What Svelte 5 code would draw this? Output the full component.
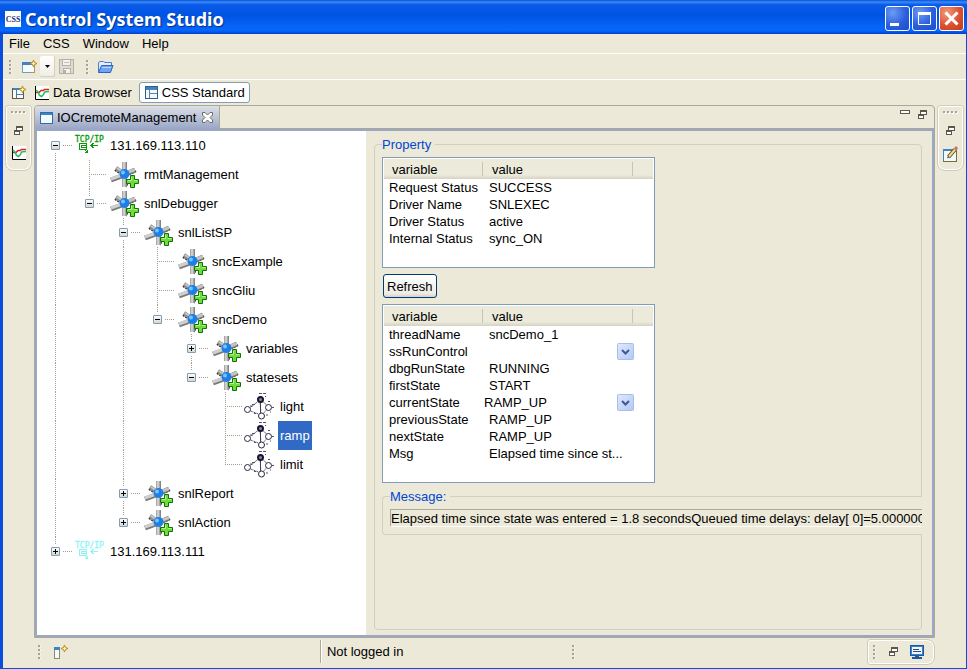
<script>
  // guides: one entry per indent cell
  // '' blank, 'v' through, 't' tee, 'l' last child, 'r' first root
  const tree = [
    { label: '131.169.113.110', icon: 'host', open: true, guides: ['r'] },
    { label: 'rmtManagement', icon: 'node', guides: ['v', 't'] },
    { label: 'snlDebugger', icon: 'node', open: true, guides: ['v', 'l'] },
    { label: 'snlListSP', icon: 'node', open: true, guides: ['v', '', 't'] },
    { label: 'sncExample', icon: 'node', guides: ['v', '', 'v', 't'] },
    { label: 'sncGliu', icon: 'node', guides: ['v', '', 'v', 't'] },
    { label: 'sncDemo', icon: 'node', open: true, guides: ['v', '', 'v', 'l'] },
    { label: 'variables', icon: 'node', open: false, guides: ['v', '', 'v', '', 't'] },
    { label: 'statesets', icon: 'node', open: true, guides: ['v', '', 'v', '', 'l'] },
    { label: 'light', icon: 'state', guides: ['v', '', 'v', '', '', 't'] },
    { label: 'ramp', icon: 'state', selected: true, guides: ['v', '', 'v', '', '', 't'] },
    { label: 'limit', icon: 'state', guides: ['v', '', 'v', '', '', 'l'] },
    { label: 'snlReport', icon: 'node', open: false, guides: ['v', '', 't'] },
    { label: 'snlAction', icon: 'node', open: false, guides: ['v', '', 'l'] },
    { label: '131.169.113.111', icon: 'hostOff', open: false, guides: ['l'] },
  ];

  const driver = [
    ['Request Status', 'SUCCESS'],
    ['Driver Name', 'SNLEXEC'],
    ['Driver Status', 'active'],
    ['Internal Status', 'sync_ON'],
  ];

  const thread = [
    ['threadName', 'sncDemo_1'],
    ['ssRunControl', '', true],
    ['dbgRunState', 'RUNNING'],
    ['firstState', 'START'],
    ['currentState', 'RAMP_UP', true],
    ['previousState', 'RAMP_UP'],
    ['nextState', 'RAMP_UP'],
    ['Msg', 'Elapsed time since st...'],
  ];

  const message =
    'Elapsed time since state was entered = 1.8 secondsQueued time delays: delay[ 0]=5.000000';
</script>

{#snippet handle()}
  <svg class="handle" width="4" height="14" viewBox="0 0 4 14" aria-hidden="true">
    {#each [0, 4, 8, 12] as y}
      <rect x="1" y={y + 1} width="2" height="1" fill="#fff" />
      <rect x="0" {y} width="2" height="2" fill="#a5a297" />
    {/each}
  </svg>
{/snippet}

{#snippet hhandle()}
  <svg width="16" height="4" viewBox="0 0 16 4" aria-hidden="true">
    {#each [0, 4, 8, 12] as x}
      <rect x={x + 1} y="1" width="2" height="2" fill="#fff" />
      <rect {x} y="0" width="2" height="2" fill="#a5a297" />
    {/each}
  </svg>
{/snippet}

{#snippet restore()}
  <svg width="9" height="9" viewBox="0 0 9 9" aria-hidden="true">
    <rect x="2.500" y=".5" width="6" height="4" fill="#fff" stroke="#5c574b" />
    <path d="M2 1.500H9" stroke="#5c574b" />
    <rect x=".5" y="4.500" width="5" height="4" fill="#fff" stroke="#5c574b" />
    <path d="M0 5.500H6" stroke="#5c574b" />
  </svg>
{/snippet}

{#snippet chart()}
  <svg width="14" height="14" viewBox="0 0 14 14" aria-hidden="true">
    <rect width="14" height="14" fill="#fff" />
    <path d="M.5 0V13.500H14" fill="none" stroke="#000" />
    <path d="M1 6.500H4L6 4.500H8L9.500 3.500H14" fill="none" stroke="#e02020" stroke-width="1.500" />
    <path d="M1 4L3 6L4.500 9.500L6.500 10.500L8.500 8.500L9.500 6L14 5.500" fill="none" stroke="#20c060" stroke-width="1.500" />
  </svg>
{/snippet}

{#snippet spark(x, y)}
  <path d="M{x} {y - 3.5}L{x + 1} {y - 1}L{x + 3.5} {y}L{x + 1} {y + 1}L{x} {y + 3.5}L{x - 1} {y + 1}L{x - 3.5} {y}L{x - 1} {y - 1}Z" fill="#fff3b0" stroke="#b58a1c" />
{/snippet}

{#snippet treeIcon(kind)}
  {#if kind === 'node'}
    <svg width="32" height="29" viewBox="0 0 32 29" aria-hidden="true">
      <path d="M7 10L13 14M28 11L22 14M20 21L18 27" stroke="#222" stroke-width="2" stroke-dasharray="2 1" />
      <path d="M8 8L15 13" stroke="#8c8c8c" stroke-width="4" />
      <path d="M9 8L15 12" stroke="#c8c8c8" stroke-width="2" />
      <path d="M18 14L27 10" stroke="#777" stroke-width="5" />
      <path d="M18 13L27 9.500" stroke="#c4c4c4" stroke-width="3" />
      <path d="M16.500 2V12M16.500 18V27" stroke="#858585" stroke-width="5" />
      <path d="M16 2V12M16 18V27" stroke="#cdcdcd" stroke-width="3" />
      <path d="M3 20L14 16" stroke="#7a7a7a" stroke-width="5" />
      <path d="M3 19L14 15" stroke="#cfcfcf" stroke-width="3" />
      <circle cx="16.500" cy="14" r="5" fill="#1c7fe6" />
      <circle cx="15" cy="12.500" r="2" fill="#7cc0ff" />
      <path d="M22.500 15.500H26.500V19.500H30.500V23.500H26.500V27.500H22.500V23.500H18.500V19.500H22.500Z" fill="#6fdc3c" stroke="#14700c" />
      <path d="M23.500 17V20.500H20M26 20.500H29.500" fill="none" stroke="#b4f58c" />
    </svg>
  {:else if kind === 'state'}
    <svg width="32" height="29" viewBox="0 0 32 29" aria-hidden="true">
      <path d="M4 17L16 8L17 23L4 18M18 9L25 15L18 23" fill="none" stroke="#55506c" stroke-dasharray="2 1" />
      <path d="M16.500 10V21" stroke="#44405c" />
      <circle cx="16.500" cy="7.500" r="2.500" fill="#8a86a8" stroke="#17142c" stroke-width="2" />
      <circle cx="3.500" cy="17.500" r="3" fill="#fff" stroke="#2b2840" />
      <circle cx="24.500" cy="15.500" r="3" fill="#fff" stroke="#2b2840" />
      <circle cx="17.500" cy="24" r="3" fill="#fff" stroke="#2b2840" />
      <path d="M15 1.500H18M19 1.500H22M6 14H9M8 12.500H11M21 4.500H22M28 15.500H30M22 23H24M24 9.500H26M10 21.500H12M26 20H27" stroke="#55506c" />
    </svg>
  {:else}
    {@const ink = kind === 'host' ? '#0a9a0a' : '#8ff4f8'}
    <svg width="32" height="29" viewBox="0 0 32 29" aria-hidden="true">
      <text x="1" y="11" font-size="8" font-family="DejaVu Sans Mono, monospace" fill={ink} stroke={ink} stroke-width=".3">TCP/IP</text>
      <g stroke={ink} fill="none" shape-rendering="crispEdges">
        <rect x="5.500" y="12.500" width="7" height="6" />
        <rect x="7.500" y="14.500" width="5" height="2" />
        <path d="M16 14.500H24M19.500 12L17 14.500L19.500 17M10 18L13 21M13.500 18.500V22M10.500 21.500H14" />
      </g>
    </svg>
  {/if}
{/snippet}

{#snippet propTable(rows, tall)}
  <div class="tablebox" class:tall>
    <table>
      <colgroup><col class="c1" /><col class="c2" /><col /></colgroup>
      <thead>
        <tr><th><span>variable</span></th><th><span>value</span></th><th></th></tr>
      </thead>
      <tbody>
        {#each rows as [name, value, combo]}
          <tr>
            <td>{name}</td>
            {#if combo}
              <td class="combo">
                <span class="pick">
                  <select aria-label={name}><option>{value}</option></select>
                  <svg width="17" height="17" viewBox="0 0 17 17" aria-hidden="true">
                    <defs>
                      <linearGradient id="arrow-{name}" x1="0" y1="0" x2="1" y2="1">
                        <stop offset="0" stop-color="#e0e9fe" /><stop offset="1" stop-color="#b2c8f8" />
                      </linearGradient>
                    </defs>
                    <rect x=".5" y=".5" width="16" height="16" rx="1" fill="url(#arrow-{name})" stroke="#a9bde8" />
                    <path d="M5 7L8.500 10.500L12 7" fill="none" stroke="#3f5a8c" stroke-width="2" />
                  </svg>
                </span>
              </td>
            {:else}
              <td>{value}</td>
            {/if}
            <td></td>
          </tr>
        {/each}
      </tbody>
    </table>
  </div>
{/snippet}

<div class="window">
  <header class="title">
    <svg width="16" height="16" viewBox="0 0 16 16" aria-hidden="true">
      <rect width="16" height="16" fill="#fff" />
      <text x="8" y="11" text-anchor="middle" font-size="8" font-family="Liberation Serif, serif" font-weight="bold" fill="#26307a">CSS</text>
    </svg>
    <h1>Control System Studio</h1>
    <button class="wb" aria-label="Minimize"><svg width="23" height="23" viewBox="0 0 23 23"><rect x="4" y="16" width="9" height="3" fill="#fff" /></svg></button>
    <button class="wb" aria-label="Maximize"><svg width="23" height="23" viewBox="0 0 23 23"><path d="M5.500 5V17.500H17.500V5" fill="none" stroke="#fff" /><rect x="5" y="5" width="13" height="3" fill="#fff" /></svg></button>
    <button class="wb close" aria-label="Close"><svg width="23" height="23" viewBox="0 0 23 23"><path d="M5.500 5.500L17.500 17.500M17.500 5.500L5.500 17.500" stroke="#fff" stroke-width="3" /></svg></button>
  </header>

  <nav class="menu">
    {#each ['File', 'CSS', 'Window', 'Help'] as item}<button>{item}</button>{/each}
  </nav>

  <div class="tools">
    {@render handle()}
    <button class="ib new" aria-label="New">
      <svg width="16" height="16" viewBox="0 0 16 16">
        <rect x=".5" y="3.500" width="12" height="10" fill="#f4fafe" stroke="#b09a58" />
        <path d="M.5 13V3.500M1 13.500H9" stroke="#6d9cc4" fill="none" />
        <rect x="0" y="3" width="12" height="3" fill="#3f83c0" />
        {@render spark(11.5, 4.5)}
      </svg>
    </button>
    <button class="ib drop" aria-label="New menu"><svg width="5" height="3" viewBox="0 0 5 3"><path d="M0 0H5L2.500 3Z" /></svg></button>
    <button class="ib save" aria-label="Save">
      <svg width="15" height="15" viewBox="0 0 15 15">
        <rect x=".5" y=".5" width="14" height="14" fill="#dddbd2" stroke="#b4b2a6" />
        <rect x="3.500" y=".5" width="8" height="6" fill="#f3f2ec" stroke="#b4b2a6" />
        <path d="M5 3.500H10" stroke="#c4c2b7" />
        <rect x="4.500" y="9.500" width="7" height="5" fill="#f3f2ec" stroke="#b4b2a6" />
        <rect x="5" y="11" width="2" height="3" fill="#b4b2a6" />
      </svg>
    </button>
    {@render handle()}
    <button class="ib open" aria-label="Open">
      <svg width="17" height="14" viewBox="0 0 17 14">
        <path d="M1.500 12.500V2.500L3 1.500H6.500L8 2.500H14.500V6" fill="#e4effc" stroke="#4a7bd0" />
        <path d="M1.500 12.500L4.500 5.500H16L13.500 12.500Z" fill="#6fa4f0" stroke="#2f62c4" />
        <path d="M5 7.500H14" stroke="#b8d4fb" />
      </svg>
    </button>
  </div>

  <div class="perspectives">
    <button class="ib openp" aria-label="Open Perspective">
      <svg width="15" height="15" viewBox="0 0 15 15">
        <rect x=".5" y="3.500" width="11" height="10" fill="#f6fafc" stroke="#5f5b3e" />
        <rect x="1" y="3" width="8" height="2" fill="#3f83c0" />
        <path d="M4.500 5V13M4.500 9.500H11" stroke="#4d7ba6" />
        {@render spark(10.5, 4.5)}
      </svg>
    </button>
    <button class="persp">{@render chart()}Data Browser</button>
    <button class="persp on">
      <svg width="13" height="13" viewBox="0 0 13 13" aria-hidden="true">
        <rect x=".5" y=".5" width="12" height="12" fill="#f4f8fc" stroke="#2f5e92" />
        <rect x="1" y="1" width="11" height="2" fill="#3f83c0" />
        <path d="M1 3.500H12M4.500 4V12M5 7.500H12" stroke="#5b84ad" />
      </svg>CSS Standard
    </button>
  </div>

  <main>
    <aside class="trim">
      {@render hhandle()}
      <button class="ib" aria-label="Restore">{@render restore()}</button>
      <button class="ib" aria-label="Data Browser view">{@render chart()}</button>
    </aside>

    <section class="stack">
      <div class="tabs">
        <div class="tab">
          <svg width="13" height="12" viewBox="0 0 13 12" aria-hidden="true">
            <rect x=".5" y=".5" width="12" height="11" fill="#f2f9ff" stroke="#2f6ca8" />
            <rect x="1" y="1" width="11" height="2" fill="#3f83c0" />
          </svg>
          <span>IOCremoteManagement</span>
          <button class="ib" aria-label="Close tab">
            <svg width="11" height="11" viewBox="0 0 11 11"><path d="M.5 .5H3L5.500 3L8 .5H10.500V3L8 5.500L10.500 8V10.500H8L5.500 8L3 10.500H.5V8L3 5.500L.5 3Z" fill="#fff" stroke="#6b6a66" /></svg>
          </button>
        </div>
        <div class="tabrest">
          <button class="ib" aria-label="Minimize view"><svg width="10" height="9" viewBox="0 0 10 9"><rect x=".5" y=".5" width="9" height="3" fill="#fff" stroke="#5c574b" /></svg></button>
          <button class="ib" aria-label="Restore view">{@render restore()}</button>
        </div>
      </div>

      <div class="content">
        <ul class="tree" role="tree">
          {#each tree as node}
            <li role="treeitem" aria-selected={node.selected ?? false}>
              {#each node.guides as g, i}
                <span class="cell {g}">
                  {#if i === node.guides.length - 1 && node.open !== undefined}
                    <button class="tog" aria-label="Toggle {node.label}">
                      <svg width="9" height="9" viewBox="0 0 9 9"><path d={node.open ? 'M2 4.500H7' : 'M2 4.500H7M4.500 2V7'} stroke="#000" /></svg>
                    </button>
                  {/if}
                </span>
              {/each}
              <span class="icon">{@render treeIcon(node.icon)}</span>
              <span class="label" class:sel={node.selected}>{node.label}</span>
            </li>
          {/each}
        </ul>

        <div class="detail">
          <fieldset>
            <legend>Property</legend>
            {@render propTable(driver, false)}
            <button class="refresh">Refresh</button>
            {@render propTable(thread, true)}
            <fieldset class="msg">
              <legend>Message:</legend>
              <input type="text" readonly value={message} aria-label="Message" />
            </fieldset>
          </fieldset>
        </div>
      </div>
    </section>

    <aside class="trim">
      {@render hhandle()}
      <button class="ib" aria-label="Restore">{@render restore()}</button>
      <button class="ib" aria-label="Editor">
        <svg width="16" height="16" viewBox="0 0 16 16">
          <rect x=".5" y="3.500" width="13" height="12" fill="#f2f9ff" stroke="#7a6a3c" />
          <path d="M.5 15V4" stroke="#3f83c0" /><rect x="0" y="3" width="14" height="2" fill="#3f83c0" />
          <path d="M5.500 11L12 3.500" stroke="#6a5528" stroke-width="4" />
          <path d="M6 10.500L12 3.500" stroke="#f3d98a" stroke-width="2" />
          <path d="M12 3.500L14 1" stroke="#c8776a" stroke-width="3" />
          <path d="M4 12.500L6 11.500L5 10.500Z" fill="#222" />
        </svg>
      </button>
    </aside>
  </main>

  <footer>
    <div class="fast">
      {@render handle()}
      <button class="ib" aria-label="Fast view">
        <svg width="15" height="14" viewBox="0 0 15 14">
          <rect x=".5" y="2.500" width="5" height="11" fill="#f2f9ff" stroke="#8a8a70" />
          <rect x="0" y="2" width="6" height="3" fill="#3f83c0" />
          {@render spark(10.5, 3.5)}
        </svg>
      </button>
    </div>
    <div class="login">Not logged in</div>
    <div class="progress">{@render handle()}</div>
    <div class="ftrim">
      {@render handle()}
      <button class="ib" aria-label="Restore">{@render restore()}</button>
      <button class="ib" aria-label="Console">
        <svg width="14" height="14" viewBox="0 0 14 14">
          <rect x=".5" y=".5" width="13" height="10" fill="#3f7fc8" stroke="#1f56a0" />
          <rect x="2" y="2" width="10" height="7" fill="#eef5fc" />
          <path d="M3 4.500H9M3 6.500H11" stroke="#2a4a86" />
          <path d="M5 11.500H9M2 13H12" stroke="#1f56a0" stroke-width="2" />
        </svg>
      </button>
    </div>
  </footer>
</div>

<style>
  :global(body) {
    margin: 0;
  }
  .window {
    box-sizing: border-box;
    min-height: 100vh;
    display: flex;
    flex-direction: column;
    background: #ece9d8;
    border: solid #0a4be0;
    border-width: 0 1px 1px 3px;
    color: #000;
    font: 13px/17px 'Liberation Sans', Arial, sans-serif;
  }
  button,
  input,
  select {
    font: inherit;
    color: inherit;
    margin: 0;
    border-radius: 0;
  }
  svg {
    display: block;
    flex: none;
  }
  .ib {
    border: 0;
    padding: 0;
    background: none;
    display: flex;
    align-items: center;
    justify-content: center;
  }

  .title {
    height: 34px;
    margin: 0 -1px 0 -3px;
    box-sizing: border-box;
    padding: 3px 3px 0 5px;
    display: flex;
    align-items: center;
    background: linear-gradient(#0a4fd8, #3a8cf8 6%, #0a5ae8 14%, #0054e3 45%, #0562f6 75%, #0666fc 90%, #0040c4);
  }
  h1 {
    flex: 1;
    margin: 0 0 0 4px;
    font: bold 18px/24px 'Noto Sans', sans-serif;
    color: #fff;
    text-shadow: 1px 1px 1px #0a2f86;
  }
  .wb {
    width: 25px;
    height: 25px;
    margin-left: 2px;
    padding: 0;
    border: 1px solid #fff;
    border-radius: 3px;
    background: radial-gradient(circle at 30% 25%, #6d9bf4, #2b5fdc 55%, #1c4ccb);
  }
  .close {
    background: radial-gradient(circle at 30% 25%, #f09a7c, #dc5032 55%, #c2391c);
  }

  .menu {
    height: 19px;
    border-bottom: 1px solid #fff;
    display: flex;
    align-items: center;
  }
  .menu button {
    border: 0;
    background: none;
    padding: 0 7px 0 6px;
  }

  .tools {
    height: 25px;
    border-bottom: 1px solid #fff;
    padding-left: 6px;
    display: flex;
    align-items: center;
  }
  .new {
    margin-left: 9px;
  }
  .drop {
    width: 15px;
    height: 21px;
    margin-left: 2px;
    background: linear-gradient(#fff, #f0eee4);
    border-right: 1px solid #d4d0c0;
    border-bottom: 1px solid #d4d0c0;
    border-radius: 2px;
  }
  .save {
    margin: 0 12px 0 4px;
  }
  .open {
    margin-left: 7px;
  }

  .perspectives {
    height: 25px;
    padding-left: 9px;
    display: flex;
    align-items: center;
  }
  .persp {
    display: flex;
    align-items: center;
    gap: 4px;
    height: 21px;
    padding: 0 5px;
    border: 1px solid transparent;
    border-radius: 3px;
    background: none;
  }
  .openp {
    margin-right: 2px;
  }
  .persp.on {
    margin-left: 1px;
    padding: 0 4px 0 5px;
    background: #fff;
    border-color: #7f9db9;
  }

  main {
    flex: 1;
    display: flex;
    gap: 2px;
    padding: 0 2px;
    min-height: 0;
  }
  .trim {
    align-self: flex-start;
    box-sizing: border-box;
    width: 27px;
    height: 66px;
    padding-top: 5px;
    border: 1px solid #cfccbe;
    border-radius: 3px 3px 8px 8px;
    box-shadow: inset 0 0 0 1px #fff;
    display: flex;
    flex-direction: column;
    align-items: center;
    gap: 11px;
  }

  .stack {
    flex: 1;
    min-width: 0;
    display: flex;
    flex-direction: column;
    border: 1px solid #aca899;
    border-radius: 4px 4px 0 0;
  }
  .tabs {
    height: 25px;
    display: flex;
  }
  .tab {
    display: flex;
    align-items: center;
    gap: 4px;
    padding: 0 6px 2px 5px;
    border-right: 1px solid #aca899;
    border-radius: 3px 0 0 0;
    background: linear-gradient(#dde0e6, #9ba7c7 90%);
  }
  .tab button {
    margin-left: 2px;
  }
  .tabrest {
    flex: 1;
    display: flex;
    justify-content: flex-end;
    align-items: flex-start;
    gap: 8px;
    padding: 4px 7px 0 0;
    border-bottom: 2px solid #9ba7c7;
    box-shadow: inset 0 -1px #aca899;
  }

  .content {
    flex: 1;
    display: grid;
    grid-template-columns: 329fr 566fr;
    border: 2px solid #9ba7c7;
    border-top: 0;
  }
  .tree {
    margin: 0;
    padding: 0 0 0 1px;
    list-style: none;
    background: #fff;
  }
  .tree li {
    display: flex;
    height: 29px;
  }
  .cell {
    --dotv: repeating-linear-gradient(#a39f8c 0 1px, transparent 1px 2px);
    --doth: repeating-linear-gradient(90deg, #a39f8c 0 1px, transparent 1px 2px);
    width: 34px;
    display: flex;
    align-items: center;
    justify-content: center;
    background-repeat: no-repeat;
  }
  .v {
    background-image: var(--dotv);
    background-size: 1px 100%;
    background-position: 17px 0;
  }
  .t,
  .l,
  .r {
    background-image: var(--dotv), var(--doth);
    background-position: 17px 0, 17px 14px;
    background-size: 1px 100%, 17px 1px;
  }
  .l {
    background-size: 1px 14px, 17px 1px;
  }
  .r {
    background-position: 17px 14px, 17px 14px;
  }
  .tog {
    width: 9px;
    height: 9px;
    padding: 0;
    border: 0;
    border-radius: 1px;
    outline: 1px solid #7b9ebd;
    outline-offset: -1px;
    background: linear-gradient(#fff, #d8d2c4);
    box-shadow: 0 0 0 2px #fff;
  }
  .icon {
    width: 36px;
    display: flex;
    justify-content: center;
  }
  .label {
    padding: 0 2px;
    line-height: 29px;
  }
  .sel {
    background: #316ac5;
    color: #fff;
  }

  .detail {
    min-width: 0;
    display: flex;
    padding: 5px 10px 5px 8px;
  }
  fieldset {
    box-sizing: border-box;
    flex: 1;
    min-width: 0;
    margin: 0;
    padding: 4px 0 0 7px;
    border: 1px solid #d0d0bf;
    border-radius: 4px;
  }
  legend {
    padding: 0 4px 0 0;
    color: #0046d5;
  }
  .tablebox {
    box-sizing: border-box;
    width: 273px;
    height: 111px;
    padding: 1px;
    border: 1px solid #7f9db9;
    background: #fff;
  }
  .tablebox.tall {
    height: 179px;
  }
  table {
    width: 100%;
    table-layout: fixed;
    border-collapse: collapse;
  }
  .c1 {
    width: 100px;
  }
  .c2 {
    width: 150px;
  }
  th {
    height: 20px;
    padding: 0;
    font-weight: normal;
    text-align: left;
    background: linear-gradient(#ebeadb 80%, #d6d2c2);
  }
  th span {
    display: block;
    height: 14px;
    line-height: 16px;
    margin-right: 1px;
    padding-left: 8px;
    border-right: 1px solid #c7c5b2;
  }
  td {
    height: 17px;
    padding: 0 0 0 5px;
    white-space: nowrap;
  }
  td.combo {
    padding: 0;
  }
  .pick {
    display: grid;
    height: 17px;
  }
  .pick > * {
    grid-area: 1 / 1;
  }
  .pick svg {
    justify-self: end;
    pointer-events: none;
  }
  select {
    appearance: none;
    width: 100%;
    height: 17px;
    padding: 0;
    border: 0;
    background: #fff;
  }
  .refresh {
    display: block;
    height: 24px;
    margin: 6px 1px;
    padding: 0 3px;
    border: 1px solid #003c74;
    border-radius: 3px;
    background: linear-gradient(#fff, #ecebe5 85%, #d6d0c5);
  }
  .msg {
    margin: 5px -1px 0 0;
    padding: 4px 0 7px 7px;
    border-right: 0;
    border-radius: 4px 0 0 4px;
    background: #ece9d8;
  }
  .msg input {
    box-sizing: border-box;
    display: block;
    width: 100%;
    height: 18px;
    padding: 0;
    border: solid #aca899;
    border-width: 1px 0 1px 1px;
    border-bottom-color: #fff;
    background: #ece9d8;
  }

  footer {
    height: 27px;
    padding: 0 31px 3px 0;
    display: flex;
    align-items: center;
  }
  .fast {
    width: 34%;
    display: flex;
    align-items: center;
    gap: 12px;
    padding-left: 35px;
    box-sizing: border-box;
  }
  .login {
    width: 245px;
    height: 23px;
    line-height: 23px;
    padding-left: 6px;
    border-left: 1px solid #aca899;
    box-shadow: inset 1px 0 #fff;
  }
  .progress {
    flex: 1;
  }
  .ftrim {
    height: 26px;
    width: 68px;
    box-sizing: border-box;
    display: flex;
    align-items: center;
    gap: 12px;
    padding-left: 5px;
    border: 1px solid #cfccbe;
    border-radius: 3px 8px 8px 3px;
    box-shadow: inset 0 0 0 1px #fff;
  }
</style>
